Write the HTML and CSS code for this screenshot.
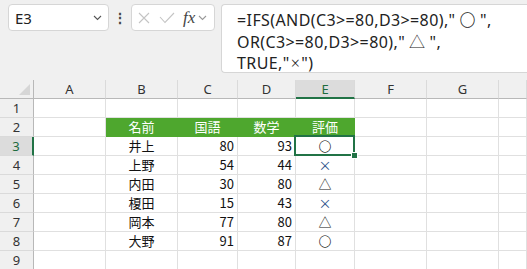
FILE: index.html
```html
<!DOCTYPE html>
<html lang="ja">
<head>
  <meta charset="UTF-8">
  <title>IFS</title>
  <link rel="stylesheet" href="styles.css">
</head>
<body>
  <div class="formula-bar">
    <div class="name-box">
      <span class="name-text">E3</span>
      <svg class="chev" width="9" height="6" viewBox="0 0 9 6"><polyline points="1,1 4.5,4.5 8,1" fill="none" stroke="#555" stroke-width="1.1"/></svg>
    </div>
    <div class="more-dots">⋮</div>
    <div class="fx-box">
      <svg width="12" height="12" viewBox="0 0 12 12"><path d="M1 1 L11 11 M11 1 L1 11" stroke="#c4c4c4" stroke-width="1.1" fill="none"/></svg>
      <svg width="16" height="12" viewBox="0 0 16 12"><polyline points="1,5 6,10.5 15,1" stroke="#c4c4c4" stroke-width="1.1" fill="none"/></svg>
      <span class="fx">fx</span>
      <svg class="chev" width="9" height="6" viewBox="0 0 9 6"><polyline points="1,1 4.5,4.5 8,1" fill="none" stroke="#999" stroke-width="1.1"/></svg>
    </div>
    <div class="formula">=IFS(AND(C3&gt;=80,D3&gt;=80),"<span class="sym">〇</span>",<br>OR(C3&gt;=80,D3&gt;=80),"<span class="sym">△</span>",<br>TRUE,"<span class="sym small">×</span>")</div>
  </div>

  <div class="sheet">
    <div class="corner"><span class="tri"></span></div>
    <div class="col-head">A</div>
    <div class="col-head">B</div>
    <div class="col-head">C</div>
    <div class="col-head">D</div>
    <div class="col-head active">E</div>
    <div class="col-head">F</div>
    <div class="col-head">G</div>
    <div class="col-head"></div>

    <div class="row-head">1</div>
    <div class="cell"></div><div class="cell"></div><div class="cell"></div><div class="cell"></div><div class="cell"></div><div class="cell"></div><div class="cell"></div><div class="cell"></div>

    <div class="row-head">2</div>
    <div class="cell"></div>
    <div class="cell head">名前</div>
    <div class="cell head">国語</div>
    <div class="cell head">数学</div>
    <div class="cell head">評価</div>
    <div class="cell"></div><div class="cell"></div><div class="cell"></div>

    <div class="row-head active">3</div>
    <div class="cell"></div>
    <div class="cell center">井上</div>
    <div class="cell num">80</div>
    <div class="cell num">93</div>
    <div class="cell center mark selected">〇</div>
    <div class="cell"></div><div class="cell"></div><div class="cell"></div>

    <div class="row-head">4</div>
    <div class="cell"></div>
    <div class="cell center">上野</div>
    <div class="cell num">54</div>
    <div class="cell num">44</div>
    <div class="cell center cross">×</div>
    <div class="cell"></div><div class="cell"></div><div class="cell"></div>

    <div class="row-head">5</div>
    <div class="cell"></div>
    <div class="cell center">内田</div>
    <div class="cell num">30</div>
    <div class="cell num">80</div>
    <div class="cell center">△</div>
    <div class="cell"></div><div class="cell"></div><div class="cell"></div>

    <div class="row-head">6</div>
    <div class="cell"></div>
    <div class="cell center">榎田</div>
    <div class="cell num">15</div>
    <div class="cell num">43</div>
    <div class="cell center cross">×</div>
    <div class="cell"></div><div class="cell"></div><div class="cell"></div>

    <div class="row-head">7</div>
    <div class="cell"></div>
    <div class="cell center">岡本</div>
    <div class="cell num">77</div>
    <div class="cell num">80</div>
    <div class="cell center">△</div>
    <div class="cell"></div><div class="cell"></div><div class="cell"></div>

    <div class="row-head">8</div>
    <div class="cell"></div>
    <div class="cell center">大野</div>
    <div class="cell num">91</div>
    <div class="cell num">87</div>
    <div class="cell center mark">〇</div>
    <div class="cell"></div><div class="cell"></div><div class="cell"></div>

    <div class="row-head">9</div>
    <div class="cell"></div><div class="cell"></div><div class="cell"></div><div class="cell"></div><div class="cell"></div><div class="cell"></div><div class="cell"></div><div class="cell"></div>
  </div>
</body>
</html>
```

FILE: styles.css
```css
body {
  margin: 0;
  background: #f0f0f0;
  font-family: 'Noto Sans', 'Noto Sans CJK JP', sans-serif;
  color: #222;
  overflow: hidden;
}
.formula-bar {
  display: flex;
  align-items: flex-start;
  height: 80px;
  padding-top: 4px;
  box-sizing: border-box;
}
.name-box {
  margin-left: 8px;
  width: 101px;
  height: 27px;
  box-sizing: border-box;
  background: #fff;
  border: 1px solid #d6d6d6;
  border-radius: 4px;
  display: flex;
  align-items: center;
  justify-content: space-between;
  padding: 0 6px 0 6px;
}
.name-text {
  font-size: 15px;
  color: #222;
}
.more-dots {
  width: 22px;
  text-align: center;
  font-size: 14px;
  font-weight: 700;
  line-height: 27px;
  color: #444;
}
.fx-box {
  width: 84px;
  height: 27px;
  box-sizing: border-box;
  background: #fff;
  border: 1px solid #d6d6d6;
  border-radius: 4px;
  display: flex;
  align-items: center;
  gap: 9px;
  padding: 0 0 0 6px;
}
.fx {
  font-family: 'Liberation Serif', serif;
  font-style: italic;
  font-size: 17px;
  color: #444;
  margin-left: -1px;
  margin-right: -6px;
}
.formula {
  flex: 1;
  margin-left: 6px;
  height: 69px;
  box-sizing: border-box;
  background: #fff;
  border: 1px solid #d6d6d6;
  border-right: none;
  border-radius: 4px 0 0 4px;
  padding: 5px 0 0 15px;
  font-size: 16px;
  line-height: 21.5px;
  letter-spacing: 0.4px;
  color: #222;
  white-space: nowrap;
}
.sym {
  margin: 0 4px;
  font-weight: 300;
}
.sym.small {
  margin: 0 1px;
}
.sheet {
  display: grid;
  grid-template-columns: 34px 72px 72px 60px 58px 59px 72px 72px 1fr;
  grid-auto-rows: 19px;
  background: #fff;
}
.corner, .col-head {
  background: #f0f0f0;
  border-bottom: 1px solid #b8b8b8;
  box-sizing: border-box;
}
.corner {
  border-right: 1px solid #b8b8b8;
  position: relative;
}
.tri {
  position: absolute;
  right: 3px;
  bottom: 3px;
  width: 0;
  height: 0;
  border-left: 11px solid transparent;
  border-bottom: 11px solid #d6d6d6;
}
.col-head {
  border-right: 1px solid #dadada;
  text-align: center;
  font-size: 13px;
  line-height: 18px;
  color: #333;
}
.col-head.active {
  background: #dcdcdc;
  color: #1d6b3e;
  border-bottom: 2px solid #217346;
}
.row-head {
  background: #f0f0f0;
  border-right: 1px solid #b8b8b8;
  border-bottom: 1px solid #dadada;
  box-sizing: border-box;
  text-align: center;
  font-size: 13px;
  line-height: 18px;
  color: #333;
}
.row-head.active {
  background: #dcdcdc;
  color: #1d6b3e;
  border-right: 2px solid #217346;
}
.cell {
  border-right: 1px solid #e0e0e0;
  border-bottom: 1px solid #e0e0e0;
  box-sizing: border-box;
  font-family: 'Noto Sans CJK JP', sans-serif;
  font-size: 13px;
  line-height: 18px;
  color: #111;
}
.cell.head {
  background: #4ea72e;
  border-color: #4ea72e;
  color: #fff;
  text-align: center;
}
.cell.center {
  text-align: center;
}
.cell.mark {
  font-weight: 300;
}
.cell.cross {
  color: #2b4f8c;
}
.cell.num {
  text-align: right;
  padding-right: 3px;
}
.cell.selected {
  position: relative;
}
.cell.selected::before {
  content: '';
  position: absolute;
  left: -2px;
  top: -2px;
  right: -1px;
  bottom: -1px;
  border: 2px solid #217346;
}
.cell.selected::after {
  content: '';
  position: absolute;
  right: -4px;
  bottom: -4px;
  width: 5px;
  height: 5px;
  background: #217346;
  border: 1px solid #fff;
}
```
